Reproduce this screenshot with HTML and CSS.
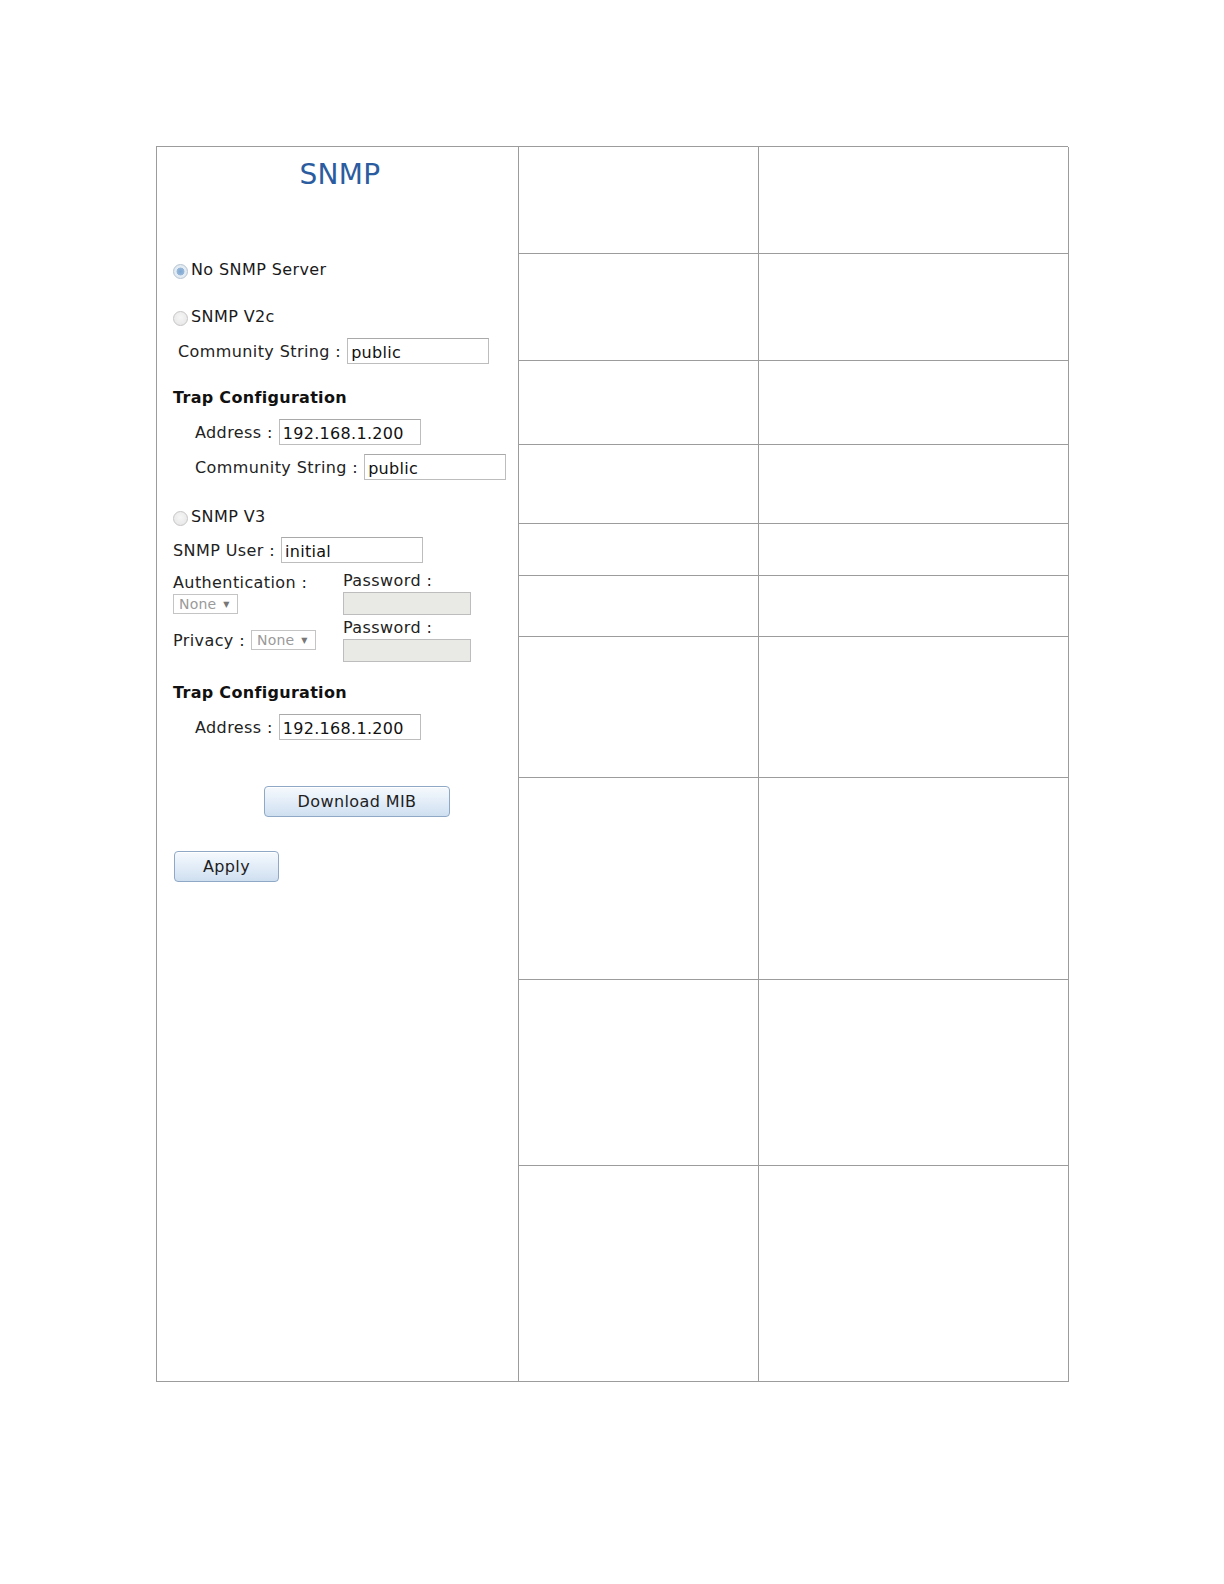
FILE: index.html
```html
<!DOCTYPE html>
<html>
<head>
<meta charset="utf-8">
<title>SNMP</title>
<link rel="stylesheet" href="styles.css">
</head>
<body>
<div class="sheet">
  <div class="cell left">
    <h1 class="title">SNMP</h1>

    <label class="radio-row r1"><input type="radio" name="mode" class="radio" checked>No SNMP Server</label>

    <label class="radio-row r2"><input type="radio" name="mode" class="radio">SNMP V2c</label>
    <div class="field f-v2c"><span class="lbl">Community String :</span><input class="txt" type="text" value="public"></div>

    <div class="section s1">Trap Configuration</div>
    <div class="field indent f-addr1"><span class="lbl">Address :</span><input class="txt" type="text" value="192.168.1.200"></div>
    <div class="field indent f-comm2"><span class="lbl">Community String :</span><input class="txt" type="text" value="public"></div>

    <label class="radio-row r3"><input type="radio" name="mode" class="radio">SNMP V3</label>
    <div class="field f-user"><span class="lbl">SNMP User :</span><input class="txt" type="text" value="initial"></div>

    <div class="v3-grid">
      <div class="auth">
        <div class="lbl auth-lbl">Authentication :</div>
        <div class="sel">None <span class="caret">&#9660;</span></div>
      </div>
      <div class="pw pw1">
        <div class="lbl pw-lbl">Password :</div>
        <div class="pw-box"></div>
      </div>
      <div class="priv">
        <span class="lbl">Privacy :</span>
        <div class="sel">None <span class="caret">&#9660;</span></div>
      </div>
      <div class="pw pw2">
        <div class="lbl pw-lbl">Password :</div>
        <div class="pw-box"></div>
      </div>
    </div>

    <div class="section s2">Trap Configuration</div>
    <div class="field indent f-addr2"><span class="lbl">Address :</span><input class="txt" type="text" value="192.168.1.200"></div>

    <button class="btn btn-mib" type="button">Download MIB</button>
    <button class="btn btn-apply" type="button">Apply</button>
  </div>

  <div class="cell c r-a"></div><div class="cell c2 r-a"></div>
  <div class="cell c r-b"></div><div class="cell c2 r-b"></div>
  <div class="cell c r-c"></div><div class="cell c2 r-c"></div>
  <div class="cell c r-d"></div><div class="cell c2 r-d"></div>
  <div class="cell c r-e"></div><div class="cell c2 r-e"></div>
  <div class="cell c r-f"></div><div class="cell c2 r-f"></div>
  <div class="cell c r-g"></div><div class="cell c2 r-g"></div>
  <div class="cell c r-h"></div><div class="cell c2 r-h"></div>
  <div class="cell c r-i"></div><div class="cell c2 r-i"></div>
  <div class="cell c r-j"></div><div class="cell c2 r-j"></div>
</div>
</body>
</html>
```
FILE: styles.css
```css
html, body {
  margin: 0;
  padding: 0;
  background: #ffffff;
}
body {
  font-family: "DejaVu Sans", Verdana, sans-serif;
  font-size: 16px;
  letter-spacing: 0.4px;
  color: #1a1a1a;
}
.sheet {
  margin: 146px 0 0 156px;
  width: 912px;
  display: grid;
  grid-template-columns: 362px 240px 310px;
  grid-template-rows: 107px 107px 84px 79px 52px 61px 141px 202px 186px 216px;
  border-top: 1px solid #9c9c9c;
  border-left: 1px solid #9c9c9c;
  box-sizing: border-box;
}
.cell {
  border-right: 1px solid #9c9c9c;
  border-bottom: 1px solid #9c9c9c;
  box-sizing: border-box;
}
.left {
  grid-column: 1;
  grid-row: 1 / span 10;
  padding-left: 16px;
  display: flex;
  flex-direction: column;
  align-items: flex-start;
}
.c { grid-column: 2; }
.c2 { grid-column: 3; }

.title {
  align-self: stretch;
  margin: 11px 0 0 -16px;
  font-size: 28px;
  line-height: 34px;
  font-weight: normal;
  letter-spacing: 0.3px;
  color: #2b5c9f;
  text-align: center;
  padding-left: 5px;
}
.radio-row {
  display: flex;
  align-items: center;
  height: 20px;
  line-height: 20px;
  color: #1a1a1a;
}
.r1 { margin-top: 68px; }
.r2 { margin-top: 27px; }
.r3 { margin-top: 27px; }
.radio {
  -webkit-appearance: none;
  appearance: none;
  width: 15px;
  height: 15px;
  margin: 3px 3px 0 0;
  border-radius: 50%;
  border: 1px solid #c6c6c6;
  background: radial-gradient(circle at 50% 40%, #f6f6f6 0%, #e4e4e4 100%);
  box-sizing: border-box;
}
.radio:checked {
  border-color: #b5c3d1;
  background: radial-gradient(circle, #7ea8d3 0%, #98b8d9 40%, #e4ecf4 46%, #dfe7ef 100%);
}
.field {
  display: flex;
  align-items: center;
  height: 26px;
}
.lbl {
  color: #222;
  white-space: nowrap;
}
.field .lbl { margin-right: 6px; }
.indent { padding-left: 22px; }
.f-v2c { margin-top: 11px; padding-left: 5px; }
.f-addr1 { margin-top: 11px; }
.f-comm2 { margin-top: 9px; }
.f-user { margin-top: 10px; }
.f-addr2 { margin-top: 11px; }
.txt {
  font-family: "DejaVu Sans", Verdana, sans-serif;
  font-size: 16px;
  letter-spacing: 0.3px;
  color: #111;
  width: 142px;
  height: 26px;
  box-sizing: border-box;
  border: 1px solid #bdbdbd;
  border-top-color: #a9a9a9;
  padding: 2px 3px 0 3px;
  margin: 0;
  background: #fff;
  outline: none;
}
.section {
  font-weight: bold;
  color: #111;
  line-height: 20px;
  height: 20px;
  letter-spacing: 0.3px;
}
.s1 { margin-top: 24px; }
.s2 { margin-top: 21px; }

.v3-grid {
  margin-top: 8px;
  display: grid;
  grid-template-columns: 170px 140px;
  row-gap: 3px;
}
.auth { padding-top: 2px; }
.auth-lbl { line-height: 20px; height: 20px; }
.auth .sel { margin-top: 1px; }
.pw-lbl { line-height: 20px; height: 20px; }
.pw-box {
  margin-top: 1px;
  width: 128px;
  height: 23px;
  box-sizing: border-box;
  border: 1px solid #bdbdbd;
  background: #e9e9e6;
}
.priv {
  display: flex;
  align-items: center;
}
.priv .lbl { margin-right: 6px; }
.sel {
  display: inline-flex;
  align-items: center;
  width: 65px;
  height: 20px;
  box-sizing: border-box;
  border: 1px solid #c4c4c4;
  padding: 0 0 0 5px;
  font-size: 14px;
  letter-spacing: 0.2px;
  color: #9a9a9a;
  background: #fff;
}
.caret {
  font-size: 8px;
  margin-left: 7px;
  color: #777;
}

.btn {
  font-family: "DejaVu Sans", Verdana, sans-serif;
  font-size: 16px;
  letter-spacing: 0.4px;
  color: #1e1e1e;
  height: 31px;
  border: 1px solid #8fa8c6;
  border-radius: 4px;
  background: linear-gradient(to bottom, #f5f9fd 0%, #e3edf8 50%, #cfdff0 100%);
  box-shadow: inset 0 1px 0 #ffffff;
  padding: 0;
  cursor: pointer;
}
.btn-mib {
  margin: 46px 0 0 91px;
  width: 186px;
}
.btn-apply {
  margin: 34px 0 0 1px;
  width: 105px;
}
```
